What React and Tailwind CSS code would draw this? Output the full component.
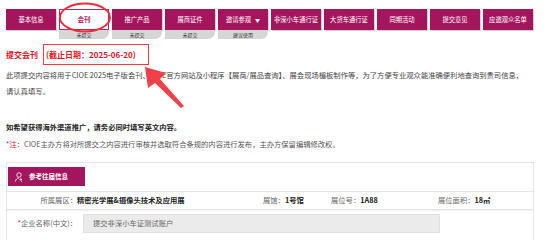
import React from 'react';

const tabs = [
      { name: '基本信息' },
      { name: '会刊', sub: '未提交', active: true },
      { name: '推广产品', sub: '未提交' },
      { name: '展商证件', sub: '未提交' },
      { name: '邀请参观', sub: '建议使用', caret: true },
      { name: '非深小车通行证' },
      { name: '大货车通行证' },
      { name: '同期活动' },
      { name: '提交意见' },
      { name: '应邀观众名单' },
];

const Tab = ({ tab }) => {
      return (
            <div className="w-[50px] flex flex-col">
                  {tab.active ? (
                        <div className="h-[21px] flex items-center justify-center bg-white border border-[#b0296c] text-[#b0185f] text-[6.5px] font-bold">
                              {tab.name}
                        </div>
                  ) : (
                        <div className="h-[21px] flex items-center justify-center gap-[4px] bg-[#a3165e] text-white text-[6.3px] shadow-[1px_1px_1px_rgba(0,0,0,0.18)] whitespace-nowrap">
                              {tab.name}
                              {tab.caret && <span className="text-[5px]">▼</span>}
                        </div>
                  )}
                  {tab.sub && (
                        <div className="h-[9px] flex items-center justify-center bg-[#d6d6d6] rounded-br-[7px] text-[5px] text-[#333]">
                              {tab.sub}
                        </div>
                  )}
            </div>
      );
};

const App = () => {
      return (
            <div className="relative w-[554px] h-[240px] overflow-hidden bg-white" style={{ fontFamily: '"Noto Sans CJK SC", "Noto Sans", sans-serif' }}>
                  <div className="pl-[6px] pt-[9px]">
                        <div className="flex gap-[3px] items-start">
                              {tabs.map((tab) => <Tab key={tab.name} tab={tab} />)}
                        </div>

                        <div className="mt-[5px] h-[21px] flex items-center text-[#e5121d] font-bold">
                              <span className="text-[8px]">提交会刊</span>
                              <span className="ml-[5px] h-[21px] w-[106px] flex items-center pl-[2px] border-[1.5px] border-[#f03a44] text-[8px]">(截止日期：2025-06-20)</span>
                        </div>

                        <p className="mt-[2px] text-[7.3px] leading-[16px] text-[#444] whitespace-nowrap">
                              此项提交内容将用于CIOE 2025电子版会刊、CIOE官方网站及小程序【展商/展品查询】、展会现场楣板制作等，为了方便专业观众能准确便利地查询到贵司信息，<br />
                              请认真填写。
                        </p>

                        <p className="mt-[20px] text-[7.3px] leading-[16px] font-bold text-[#222]">如希望获得海外渠道推广，请务必同时填写英文内容。</p>
                        <p className="mt-[1px] text-[7.3px] leading-[16px] text-[#555]">
                              <span className="text-[#e5121d]">*注：</span>CIOE主办方将对所提交之内容进行审核并选取符合条规的内容进行发布，主办方保留编辑修改权。
                        </p>

                        <div className="mt-[10px] w-[528px] border border-[#e6e6e6]">
                              <div className="h-[28px] pt-[4px] pl-[1px]">
                                    <button className="h-[19px] w-[77px] flex items-center gap-[5px] pl-[7px] bg-[#a3165e] text-white text-[6.5px] font-bold">
                                          <svg width="9" height="10" viewBox="0 0 18 20" fill="none" stroke="white" strokeWidth="1.6">
                                                <circle cx="8" cy="6" r="4.5" />
                                                <path d="M1 19c0-4 3-7 7-7" />
                                                <path d="M11 13l3 2-3 2M14 15h-5M12 18l2 1" />
                                          </svg>
                                          参考往届信息
                                    </button>
                              </div>
                              <div className="h-[19px] flex items-center border-t border-b border-[#e6e6e6] text-[7.3px] text-[#666]">
                                    <div className="w-[256px] flex">
                                          <span className="w-[70px] text-right">所属展区：</span>
                                          <span className="font-bold text-[#222]">精密光学展&amp;摄像头技术及应用展</span>
                                    </div>
                                    <div className="w-[68px]">展馆：<span className="font-bold text-[#222]">1号馆</span></div>
                                    <div className="w-[107px]">展位号：<span className="font-bold text-[#222]">1A88</span></div>
                                    <div>展位面积：<span className="font-bold text-[#222]">18㎡</span></div>
                              </div>
                              <div className="h-[40px] pt-[3px] flex items-start border-t border-[#f0f0f0]">
                                    <span className="w-[70px] h-[19px] flex items-center justify-end text-[7.3px] text-[#666]">
                                          <span className="text-[#e5121d]">*</span>企业名称(中文)：
                                    </span>
                                    <div className="ml-[6px] w-[357px] h-[19px] flex items-center pl-[9px] bg-[#ebebeb] border border-[#e0e0e0] text-[7.3px] text-[#666]">
                                          提交非深小车证测试账户
                                    </div>
                              </div>
                        </div>
                  </div>

                  <svg className="absolute left-0 top-0 pointer-events-none" width="554" height="240" viewBox="0 0 554 240">
                        <ellipse cx="85" cy="17.5" rx="25" ry="14" fill="none" stroke="#ee2b35" strokeWidth="1.8" />
                        <polygon points="145,67 166,73 160,79 184,106 181,108 155,83 148,88" fill="#f0404a" />
                  </svg>
            </div>
      );
};

export default App;
